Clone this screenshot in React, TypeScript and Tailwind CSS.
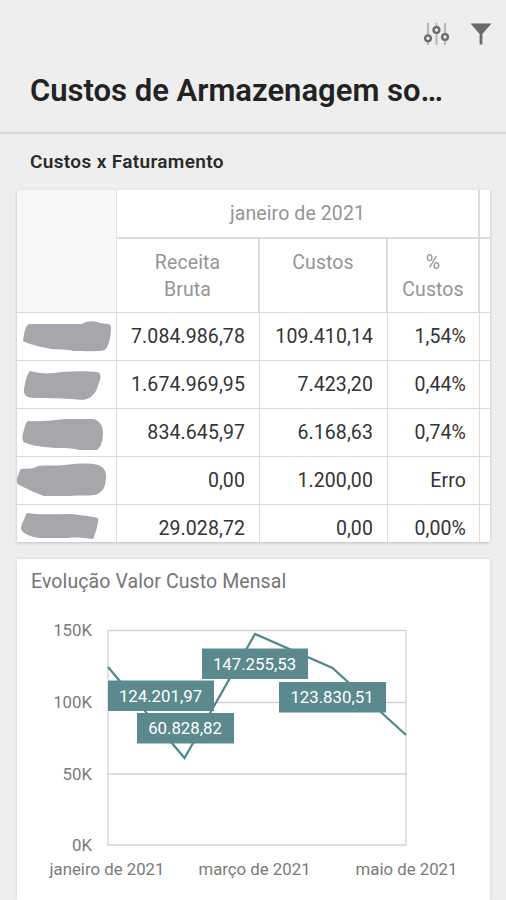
interface Row {
  receita: string;
  custos: string;
  percent: string;
  mask: string;
}

// mask is the scribble that hides the client name, in a 100x48 cell
const rows: Row[] = [
  {
    receita: "7.084.986,78",
    custos: "109.410,14",
    percent: "1,54%",
    mask: "M12 11 L65 11 C70 7 79 8 83 10 C89 11 94 10 94 14 C94 24 92 31 89 36 C87 39 72 38 57 38 C50 36 42 37 34 36 C25 34 14 32 6 28 C7 21 8 13 12 11 Z",
  },
  {
    receita: "1.674.969,95",
    custos: "7.423,20",
    percent: "0,44%",
    mask: "M13 10 C24 13 34 13 44 11 C57 10 70 10 80 11 C84 12 84 15 83 19 C81 24 80 31 75 35 C70 40 62 39 55 38 C42 37 30 37 17 37 C9 37 6 33 7 28 C8 22 9 16 12 11 Z",
  },
  {
    receita: "834.645,97",
    custos: "6.168,63",
    percent: "0,74%",
    mask: "M11 12 C24 13 36 11 48 10 L76 10 C82 11 86 16 86 24 C86 31 84 38 80 41 L62 41 C55 39 48 39 38 39 C27 38 16 37 9 34 C5 33 5 29 6 24 C8 19 8 14 11 12 Z",
  },
  {
    receita: "0,00",
    custos: "1.200,00",
    percent: "Erro",
    mask: "M4 12 C9 11 15 13 21 9 C30 8 38 9 47 8 C57 7 66 6 76 7 C85 8 89 12 89 19 C89 29 86 36 78 38 C69 39 62 38 52 39 L27 39 C20 37 9 31 2 28 C-1 26 -1 22 1 19 C2 16 2 14 4 12 Z",
  },
  {
    receita: "29.028,72",
    custos: "0,00",
    percent: "0,00%",
    mask: "M10 8 C22 10 36 9 51 9 C60 9 67 11 77 12 C81 13 82 13 81 17 C80 24 78 29 76 34 C68 33 59 32 51 33 L23 33 C14 32 6 29 4 24 C4 20 7 14 10 8 Z",
  },
];

const chartPoints = [
  { x: 108, y: 667 },
  { x: 184.5, y: 758 },
  { x: 255, y: 634 },
  { x: 332.5, y: 668 },
  { x: 406, y: 735 },
];

const chartLabels = [
  { x: 108, y: 680.5, w: 106, text: "124.201,97" },
  { x: 137, y: 713, w: 97, text: "60.828,82" },
  { x: 202, y: 648.5, w: 106, text: "147.255,53" },
  { x: 279, y: 682, w: 107, text: "123.830,51" },
];

const yTicks = [
  { y: 630.5, text: "150K" },
  { y: 702.5, text: "100K" },
  { y: 774, text: "50K" },
  { y: 845, text: "0K" },
];

const xTicks = [
  { x: 107, text: "janeiro de 2021" },
  { x: 254.5, text: "março de 2021" },
  { x: 406.5, text: "maio de 2021" },
];

const SlidersIcon = () => (
  <svg className="w-7 h-7" viewBox="0 0 28 28" fill="none">
    <path d="M6 3v22M14.5 3v22M23 3v22" stroke="#b8b8b8" strokeWidth="2.2" />
    <g fill="#eee" stroke="#6a6a6a" strokeWidth="2.4">
      <circle cx="6" cy="18.3" r="2.9" />
      <circle cx="14.5" cy="10" r="2.9" />
      <circle cx="23" cy="17" r="2.9" />
    </g>
  </svg>
);

const FunnelIcon = () => (
  <svg className="w-[22px] h-[22px]" viewBox="0 0 22 22">
    <path d="M.5.5h21L12.4 11v10.5H9.6V11z" fill="#6b6b6b" />
  </svg>
);

const CostTable = () => (
  <div className="h-[352px] w-[473px] overflow-hidden bg-white shadow-[0_1px_3px_rgba(0,0,0,0.2)]">
    <div className="flex h-[123px] border-b border-[#dcdcdc] text-[19.5px] leading-[27px] text-[#959595] tracking-[0.1px]">
      <div className="w-[100px] border-r border-[#e4e4e4] bg-[#f7f7f7]" />
      <div className="w-[363px]">
        <div className="flex h-[49px] items-center justify-center border-b-2 border-r-2 border-[#dcdcdc]">
          janeiro de 2021
        </div>
        <div className="flex h-[73px] text-center">
          <div className="w-[143px] border-r-2 border-[#dcdcdc] pt-[10px]">
            Receita
            <br />
            Bruta
          </div>
          <div className="w-32 border-r-2 border-[#dcdcdc] pt-[10px]">Custos</div>
          <div className="w-[92px] border-r-2 border-[#dcdcdc] pt-[10px]">
            %
            <br />
            Custos
          </div>
        </div>
      </div>
      <div className="flex-1">
        <div className="h-[49px] border-b-2 border-[#dcdcdc]" />
      </div>
    </div>
    {rows.map((row) => (
      <div
        key={row.receita}
        className="flex h-12 border-b border-[#dcdcdc] text-right text-[19.5px] leading-[47px] text-[#333] tracking-[0.1px]"
      >
        <div className="w-[100px] border-r border-[#dcdcdc]">
          <svg className="h-12 w-[100px]" viewBox="0 0 100 48">
            <path d={row.mask} fill="#a5a7aa" />
          </svg>
        </div>
        <div className="w-[143px] border-r border-[#dcdcdc] pr-[14px]">{row.receita}</div>
        <div className="w-32 border-r border-[#dcdcdc] pr-[14px]">{row.custos}</div>
        <div className="w-[92px] border-r border-[#dcdcdc] pr-[13px]">{row.percent}</div>
      </div>
    ))}
  </div>
);

const CostChart = () => (
  <div className="mt-[17px] h-[341px] w-[473px] bg-white shadow-[0_0_3px_rgba(0,0,0,0.12)]">
    <h3 className="h-[46px] pl-[14px] pt-[9px] text-[19.5px] leading-[27px] text-[#757575] tracking-[0.1px]">
      Evolução Valor Custo Mensal
    </h3>
    <svg className="h-[295px] w-[473px]" viewBox="17 605 473 295" fontSize="16.8">
      <path
        d="M108 630.5h298v214.5h-298zM108 702.5h298M108 774h298"
        fill="none"
        stroke="#d3d3d3"
        strokeWidth="1.3"
      />
      {yTicks.map((tick) => (
        <text key={tick.text} x="92" y={tick.y + 5.5} textAnchor="end" fill="#7a7a7a">
          {tick.text}
        </text>
      ))}
      {xTicks.map((tick) => (
        <text key={tick.text} x={tick.x} y="874.5" textAnchor="middle" fill="#7a7a7a">
          {tick.text}
        </text>
      ))}
      <polyline
        points={chartPoints.map((p) => `${p.x},${p.y}`).join(" ")}
        fill="none"
        stroke="#4f888a"
        strokeWidth="2.2"
      />
      {chartLabels.map((label) => (
        <g key={label.text}>
          <rect x={label.x} y={label.y} width={label.w} height="30.5" fill="#5a898e" />
          <text
            x={label.x + label.w / 2 - 0.5}
            y={label.y + 21}
            textAnchor="middle"
            fill="#fff"
          >
            {label.text}
          </text>
        </g>
      ))}
    </svg>
  </div>
);

const App = () => {
  return (
    <div className="h-[900px] w-[506px] overflow-hidden bg-[#eee] font-[Roboto,sans-serif]">
      <header className="h-[134px] border-b-2 border-[#d8d8d8]">
        <div className="flex h-[68px] items-center justify-end gap-5 pr-[14px]">
          <SlidersIcon />
          <FunnelIcon />
        </div>
        <h1 className="pl-[30px] text-[31px] font-semibold leading-[46px] text-[#222]">
          Custos de Armazenagem so…
        </h1>
      </header>
      <main className="pl-[17px]">
        <h2 className="h-14 pl-[13px] pt-[15px] text-[19px] font-semibold leading-[26px] text-[#2a2a2a] tracking-[0.35px]">
          Custos x Faturamento
        </h2>
        <CostTable />
        <CostChart />
      </main>
    </div>
  );
};

export default App;
